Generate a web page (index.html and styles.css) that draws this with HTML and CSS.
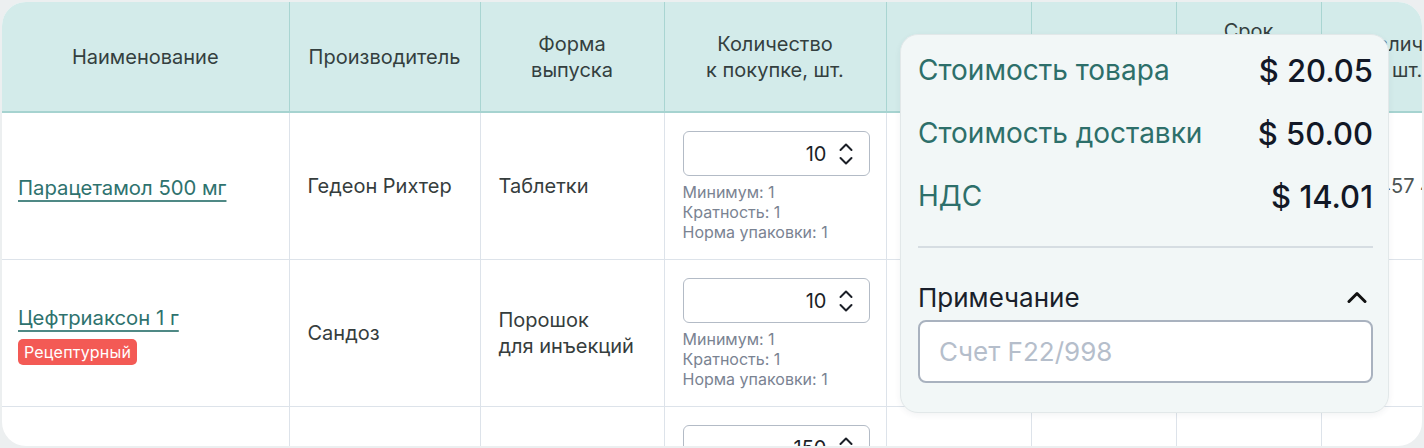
FILE: index.html
```html
<!DOCTYPE html>
<html lang="ru">
<head>
<meta charset="utf-8">
<link rel="stylesheet" href="styles.css">
</head>
<body>
<div class="card">
  <table class="grid">
    <colgroup>
      <col class="c1"><col class="c2"><col class="c3"><col class="c4"><col class="c5"><col class="c6"><col class="c7"><col class="c8">
    </colgroup>
    <thead>
      <tr>
        <th>Наименование</th>
        <th>Производитель</th>
        <th>Форма<br>выпуска</th>
        <th>Количество<br>к покупке, шт.</th>
        <th>Цена,<br>$</th>
        <th>Сумма,<br>$</th>
        <th>Срок<br>годности,<br>до</th>
        <th>Наличие,<br>шт.</th>
      </tr>
    </thead>
    <tbody>
      <tr>
        <td class="name"><a href="#" class="link">Парацетамол 500 мг</a></td>
        <td>Гедеон Рихтер</td>
        <td>Таблетки</td>
        <td class="qty">
          <div class="num"><span class="val">10</span><svg class="spin" viewBox="0 0 14 24" width="14" height="24"><path d="M1.5 8 L7 2.5 L12.5 8 M1.5 16 L7 21.5 L12.5 16" fill="none" stroke="#1b1f27" stroke-width="2" stroke-linecap="round" stroke-linejoin="round"/></svg></div>
          <div class="hint">Минимум: 1<br>Кратность: 1<br>Норма упаковки: 1</div>
        </td>
        <td></td>
        <td></td>
        <td></td>
        <td class="stock">124 457 400</td>
      </tr>
      <tr>
        <td class="name"><a href="#" class="link">Цефтриаксон 1 г</a><span class="badge">Рецептурный</span></td>
        <td>Сандоз</td>
        <td>Порошок<br>для инъекций</td>
        <td class="qty">
          <div class="num"><span class="val">10</span><svg class="spin" viewBox="0 0 14 24" width="14" height="24"><path d="M1.5 8 L7 2.5 L12.5 8 M1.5 16 L7 21.5 L12.5 16" fill="none" stroke="#1b1f27" stroke-width="2" stroke-linecap="round" stroke-linejoin="round"/></svg></div>
          <div class="hint">Минимум: 1<br>Кратность: 1<br>Норма упаковки: 1</div>
        </td>
        <td></td>
        <td></td>
        <td></td>
        <td></td>
      </tr>
      <tr>
        <td class="name"></td>
        <td></td>
        <td></td>
        <td class="qty">
          <div class="num"><span class="val">150</span><svg class="spin" viewBox="0 0 14 24" width="14" height="24"><path d="M1.5 8 L7 2.5 L12.5 8 M1.5 16 L7 21.5 L12.5 16" fill="none" stroke="#1b1f27" stroke-width="2" stroke-linecap="round" stroke-linejoin="round"/></svg></div>
          <div class="hint">Минимум: 10<br>Кратность: 10<br>Норма упаковки: 10</div>
        </td>
        <td></td>
        <td></td>
        <td></td>
        <td></td>
      </tr>
    </tbody>
  </table>

  <div class="popup">
    <div class="sum-row"><span class="lbl">Стоимость товара</span><span class="amt">$ 20.05</span></div>
    <div class="sum-row"><span class="lbl">Стоимость доставки</span><span class="amt">$ 50.00</span></div>
    <div class="sum-row"><span class="lbl">НДС</span><span class="amt">$ 14.01</span></div>
    <div class="divider"></div>
    <div class="note-head"><span>Примечание</span><svg viewBox="0 0 20 14" width="20" height="14"><path d="M2 11.5 L10 3.5 L18 11.5" fill="none" stroke="#111" stroke-width="3" stroke-linecap="round" stroke-linejoin="round"/></svg></div>
    <div class="note-input">Счет F22/998</div>
  </div>
</div>
</body>
</html>
```

FILE: styles.css
```css
* { box-sizing: border-box; }
html, body { margin: 0; padding: 0; }
body {
  background: #eceff0;
  font-family: Inter, "Noto Sans", sans-serif;
  width: 1424px;
  height: 448px;
  overflow: hidden;
  padding: 2px;
}
.card {
  position: relative;
  width: 1420px;
  height: 444px;
  background: #fff;
  border-radius: 24px;
  overflow: hidden;
}
.grid {
  border-collapse: collapse;
  table-layout: fixed;
  width: 1491px;
}
.c1 { width: 287px; }
.c2 { width: 191px; }
.c3 { width: 184px; }
.c4 { width: 222px; }
.c5 { width: 145px; }
.c6 { width: 145px; }
.c7 { width: 145px; }
.c8 { width: 172px; }
th {
  height: 110px;
  background: #d3ebea;
  color: #343f3f;
  font-weight: 400;
  font-size: 20px;
  line-height: 26px;
  text-align: center;
  vertical-align: middle;
  border-left: 1px solid #a9d5d2;
  border-bottom: 2px solid #a6d3d0;
  padding: 0 4px;
  white-space: nowrap;
}
th:first-child { border-left: none; }
td {
  border-left: 1px solid #dde3ea;
  border-bottom: 1px solid #dde3ea;
  padding: 0 18px;
  vertical-align: middle;
  font-size: 20px;
  color: #363d3d;
  line-height: 26px;
  height: 147px;
}
td:first-child { border-left: none; padding-left: 16px; }
.link {
  color: #2e726e;
  font-size: 20.3px;
  text-decoration: underline;
  text-decoration-thickness: 2px;
  text-underline-offset: 5px;
  text-decoration-color: #4f8985;
}
.name .link { display: block; width: max-content; margin-top: 3px; }
.badge {
  display: inline-block;
  margin-top: 8px;
  background: #f35a55;
  color: #fff;
  font-size: 16px;
  line-height: 26px;
  height: 26px;
  padding: 0 6px;
  border-radius: 5px;
  letter-spacing: 0.2px;
}
.qty { padding-top: 18px; padding-bottom: 17px; }
.num {
  width: 187px;
  height: 45px;
  border: 1px solid #b3bbc6;
  border-radius: 6px;
  display: flex;
  align-items: center;
  justify-content: flex-end;
  padding-right: 16px;
  gap: 12px;
  background: #fff;
}
.val { font-size: 20px; color: #1b1f27; }
.spin { display: block; }
.hint {
  margin-top: 6px;
  font-size: 16px;
  line-height: 20px;
  color: #7a8392;
}
.stock { white-space: nowrap; color: #4d5555; }

.popup {
  position: absolute;
  left: 898px;
  top: 32px;
  width: 489px;
  height: 379px;
  background: #f2f7f7;
  border: 1px solid #e2e8e9;
  border-radius: 18px;
  box-shadow: 0 2px 6px rgba(30, 50, 60, 0.06);
  padding: 15px 15px 0 17px;
}
.sum-row {
  display: grid;
  grid-template-columns: 1fr auto;
  align-items: center;
  height: 40px;
  margin-bottom: 23px;
}
.sum-row:nth-child(3) { margin-bottom: 0; }
.lbl { font-size: 28px; color: #2d6f6a; white-space: nowrap; }
.amt { font-size: 31px; color: #121826; font-weight: 500; text-align: right; white-space: nowrap; }
.divider {
  height: 2px;
  background: #d6dde2;
  margin-top: 30px;
}
.note-head {
  display: flex;
  justify-content: space-between;
  align-items: center;
  height: 30px;
  margin-top: 34px;
  font-size: 26px;
  color: #1a1f2b;
  padding-right: 6px;
}
.note-input {
  margin-top: 8px;
  height: 63px;
  border: 2px solid #a9b2bf;
  border-radius: 8px;
  background: #fff;
  display: flex;
  align-items: center;
  padding-left: 19px;
  font-size: 26px;
  color: #b5becb;
}
```
